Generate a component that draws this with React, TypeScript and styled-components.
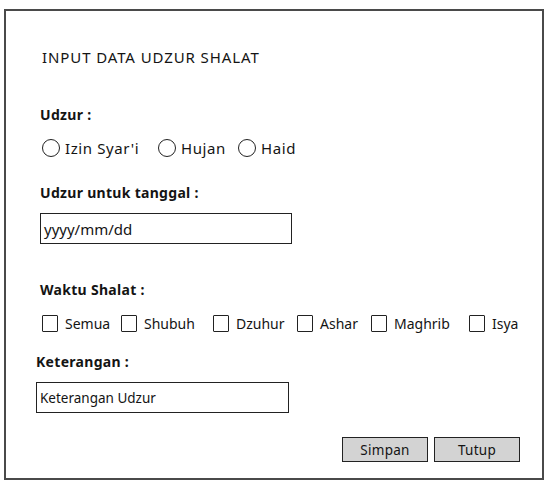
import React from "react";
import styled, { createGlobalStyle } from "styled-components";

const GlobalStyle = createGlobalStyle`
  body {
    margin: 0;
    background: #ffffff;
    font-family: "Noto Sans", "DejaVu Sans", sans-serif;
    color: #141414;
  }
`;

const Frame = styled.div`
  box-sizing: border-box;
  width: 540px;
  height: 471px;
  margin: 9px 0 0 4px;
  border: 2px solid #4a4a4a;
  padding: 36px 22px 0 34px;
  display: flex;
  flex-direction: column;
`;

const Title = styled.div`
  margin-left: 2px;
  font-size: 15px;
  line-height: 20px;
  letter-spacing: 0.9px;
`;

const Label = styled.div<{ $gap: number; $shift?: number }>`
  margin-top: ${p => p.$gap}px;
  margin-left: ${p => p.$shift || 0}px;
  font-size: 14px;
  font-weight: bold;
  line-height: 20px;
  letter-spacing: 0.3px;
`;

const OptionRow = styled.div<{ $gap: number; $size: number; $spacing: number }>`
  margin-top: ${p => p.$gap}px;
  margin-left: 2px;
  display: flex;
  align-items: center;
  height: 20px;
  font-size: ${p => p.$size}px;
  letter-spacing: ${p => p.$spacing}px;
`;

const Option = styled.label<{ $width: number; $space: number }>`
  display: flex;
  align-items: center;
  gap: ${p => p.$space}px;
  width: ${p => p.$width}px;
  flex: none;
  white-space: nowrap;
`;

const Radio = styled.span`
  box-sizing: border-box;
  width: 18px;
  height: 18px;
  border: 1.5px solid #222;
  border-radius: 50%;
  flex: none;
`;

const Check = styled.span`
  box-sizing: border-box;
  width: 16px;
  height: 17px;
  border: 1.5px solid #222;
  border-radius: 1px;
  flex: none;
`;

const Field = styled.div<{ $gap: number; $width: number; $shift?: number; $size: number }>`
  box-sizing: border-box;
  margin-top: ${p => p.$gap}px;
  margin-left: ${p => p.$shift || 0}px;
  width: ${p => p.$width}px;
  height: 31px;
  border: 1.5px solid #222;
  padding: 0 3px;
  display: flex;
  align-items: center;
  font-size: ${p => p.$size}px;
`;

const ButtonBar = styled.div`
  margin-top: 24px;
  display: flex;
  justify-content: flex-end;
  gap: 6px;
`;

const Button = styled.div`
  box-sizing: border-box;
  width: 86px;
  height: 25px;
  background: #d3d3d3;
  border: 1.5px solid #222;
  display: flex;
  align-items: center;
  justify-content: center;
  font-size: 13.5px;
  letter-spacing: 0.3px;
`;

const radios = [
  { text: "Izin Syar'i", width: 116 },
  { text: "Hujan", width: 80 },
  { text: "Haid", width: 60 }
];

const prayers = [
  { text: "Semua", width: 79 },
  { text: "Shubuh", width: 92 },
  { text: "Dzuhur", width: 84 },
  { text: "Ashar", width: 74 },
  { text: "Maghrib", width: 98 },
  { text: "Isya", width: 50 }
];

const App: React.FC<{}> = () => {
  return (
    <>
      <GlobalStyle />
      <Frame>
        <Title>INPUT DATA UDZUR SHALAT</Title>
        <Label $gap={38}>Udzur :</Label>
        <OptionRow $gap={13} $size={15} $spacing={0.6}>
          {radios.map(r => (
            <Option key={r.text} $width={r.width} $space={5}>
              <Radio />
              <span>{r.text}</span>
            </Option>
          ))}
        </OptionRow>
        <Label $gap={25}>Udzur untuk tanggal :</Label>
        <Field $gap={10} $width={252} $size={15}>
          yyyy/mm/dd
        </Field>
        <Label $gap={36}>Waktu Shalat :</Label>
        <OptionRow $gap={13} $size={14} $spacing={0}>
          {prayers.map(p => (
            <Option key={p.text} $width={p.width} $space={7}>
              <Check />
              <span>{p.text}</span>
            </Option>
          ))}
        </OptionRow>
        <Label $gap={19} $shift={-4}>
          Keterangan :
        </Label>
        <Field $gap={10} $width={253} $shift={-4} $size={13.5}>
          Keterangan Udzur
        </Field>
        <ButtonBar>
          <Button>Simpan</Button>
          <Button>Tutup</Button>
        </ButtonBar>
      </Frame>
    </>
  );
};

export default App;
